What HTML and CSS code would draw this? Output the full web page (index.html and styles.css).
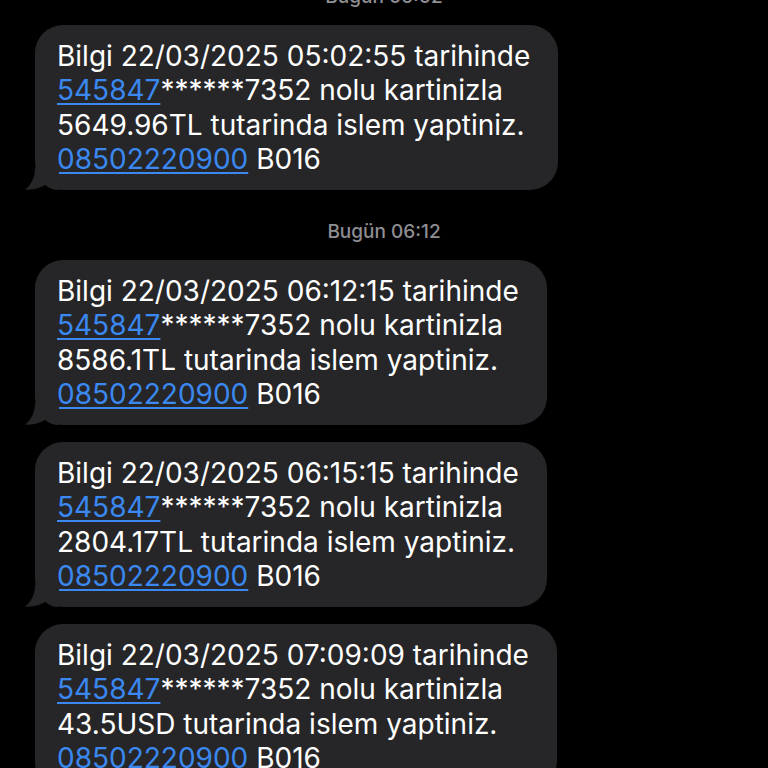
FILE: index.html
```html
<!DOCTYPE html>
<html lang="tr">
<head>
<meta charset="utf-8">
<title>Mesajlar</title>
<link rel="stylesheet" href="styles.css">
</head>
<body>
<main class="thread">
  <div class="stamp stamp-first">Bugün 05:02</div>
  <div class="bubble">
    Bilgi 22/03/2025 05:02:55 tarihinde<br>
    <span class="link">545847</span>******7352 nolu kartinizla<br>
    5649.96TL tutarinda islem yaptiniz.<br>
    <span class="link">08502220900</span> B016
    <svg class="tail" viewBox="0 0 34 22" width="34" height="22"><path d="M10,0 C10,10 6,17 0,21.5 C8,22.5 15,20 20,17 C24,20 28,22 34,22 L34,0 Z"/></svg>
  </div>

  <div class="stamp">Bugün 06:12</div>
  <div class="bubble">
    Bilgi 22/03/2025 06:12:15 tarihinde<br>
    <span class="link">545847</span>******7352 nolu kartinizla<br>
    8586.1TL tutarinda islem yaptiniz.<br>
    <span class="link">08502220900</span> B016
    <svg class="tail" viewBox="0 0 34 22" width="34" height="22"><path d="M10,0 C10,10 6,17 0,21.5 C8,22.5 15,20 20,17 C24,20 28,22 34,22 L34,0 Z"/></svg>
  </div>
  <div class="bubble">
    Bilgi 22/03/2025 06:15:15 tarihinde<br>
    <span class="link">545847</span>******7352 nolu kartinizla<br>
    2804.17TL tutarinda islem yaptiniz.<br>
    <span class="link">08502220900</span> B016
    <svg class="tail" viewBox="0 0 34 22" width="34" height="22"><path d="M10,0 C10,10 6,17 0,21.5 C8,22.5 15,20 20,17 C24,20 28,22 34,22 L34,0 Z"/></svg>
  </div>
  <div class="bubble">
    Bilgi 22/03/2025 07:09:09 tarihinde<br>
    <span class="link">545847</span>******7352 nolu kartinizla<br>
    43.5USD tutarinda islem yaptiniz.<br>
    <span class="link">08502220900</span> B016
    <svg class="tail" viewBox="0 0 34 22" width="34" height="22"><path d="M10,0 C10,10 6,17 0,21.5 C8,22.5 15,20 20,17 C24,20 28,22 34,22 L34,0 Z"/></svg>
  </div>
</main>
</body>
</html>
```

FILE: styles.css
```css
html, body {
  margin: 0;
  padding: 0;
  background: #000;
  height: 100%;
  overflow: hidden;
}

.thread {
  display: flex;
  flex-direction: column;
  align-items: flex-start;
  padding-left: 35px;
  font-family: Inter, "Noto Sans", "Liberation Sans", sans-serif;
}

.stamp {
  align-self: stretch;
  margin-left: -35px;
  text-align: center;
  color: #8e8e93;
  font-size: 19px;
  font-weight: 500;
  line-height: 20px;
  height: 20px;
  margin-top: 15px;
  margin-bottom: 18px;
}

.stamp-first {
  margin-top: -13px;
}

.bubble {
  position: relative;
  width: fit-content;
  background: #262628;
  color: #fff;
  border-radius: 28px;
  padding: 13.5px 28px 13.5px 22px;
  font-size: 28px;
  line-height: 34.5px;
  margin-bottom: 17px;
  white-space: nowrap;
}

.link {
  color: #3a88f0;
  text-decoration: underline;
  text-decoration-thickness: 1.5px;
  text-underline-offset: 3px;
}

.tail {
  position: absolute;
  left: -10px;
  bottom: 0;
  fill: #262628;
  display: block;
}
```
